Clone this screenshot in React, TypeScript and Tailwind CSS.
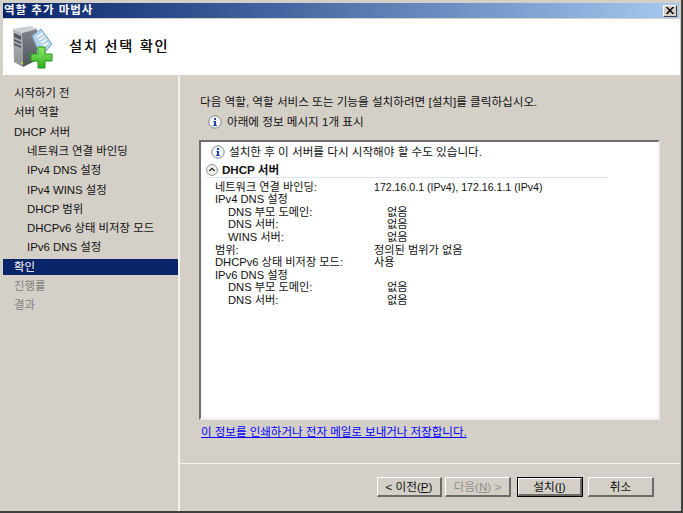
import React from 'react'

const font = { fontFamily: '"Liberation Sans", "Noto Sans CJK KR", sans-serif' }

function ServerIcon() {
  return (
    <svg width="41" height="43" viewBox="12 26 41 43" className="shrink-0">
      <defs>
        <linearGradient id="side" x1="0" y1="0" x2="0" y2="1">
          <stop offset="0" stopColor="#7f858b" />
          <stop offset="1" stopColor="#4f5458" />
        </linearGradient>
        <linearGradient id="front" x1="0" y1="0" x2="0" y2="1">
          <stop offset="0" stopColor="#b4babf" />
          <stop offset="1" stopColor="#8d9297" />
        </linearGradient>
        <linearGradient id="plus" x1="0" y1="0" x2="0" y2="1">
          <stop offset="0" stopColor="#8fe866" />
          <stop offset="1" stopColor="#2fae22" />
        </linearGradient>
      </defs>
      <path d="M13 29 L30 26 L37 29 L22 33 Z" fill="#c9ced2" />
      <path d="M13 29 L22 33 L23 67 L14 62 Z" fill="url(#front)" />
      <path d="M22 33 L37 29 L37 60 L23 67 Z" fill="url(#side)" />
      <path d="M14 33 L21 36 L21 40 L14 37 Z M14 39 L21 42 L21 44 L14 41 Z M14 43 L21 46 L21 48 L14 45 Z" fill="#55595d" />
      <rect x="21" y="62" width="2" height="2" fill="#b7d83a" />
      <path d="M32 36 L41 29 L52 44 L45 52 L38 50 Z" fill="#b4d4ea" stroke="#6f9fc2" strokeWidth="1" />
      <path d="M37 37 L43 33 M39 40 L45 36 M41 43 L47 39 M43 46 L48 43" stroke="#fff" strokeWidth="1.5" />
      <path
        d="M31 54 H38 V47 H45 V54 H52 V61 H45 V68 H38 V61 H31 Z"
        fill="url(#plus)"
        stroke="#1f9a1a"
        strokeWidth="1"
      />
    </svg>
  )
}

function InfoIcon() {
  return (
    <svg width="14" height="14" viewBox="0 0 14 14" className="shrink-0">
      <circle cx="7" cy="7" r="6.2" fill="#f4f6fa" stroke="#7c8796" strokeWidth="1" />
      <rect x="6" y="3" width="2" height="2" fill="#1c46b8" />
      <path d="M5.5 6 H8 V10 H9 V11 H5 V10 H6 V7 H5.5 Z" fill="#1c46b8" />
    </svg>
  )
}

function CollapseIcon() {
  return (
    <svg width="12" height="12" viewBox="0 0 12 12" className="shrink-0">
      <circle cx="6" cy="6" r="5.4" fill="#f3f3f0" stroke="#8a8f96" strokeWidth="1" />
      <path d="M3.3 7 L6 4.4 L8.7 7" fill="none" stroke="#222" strokeWidth="1.2" />
    </svg>
  )
}

function NavItem({ label, sub, active, muted }: { label: string; sub?: boolean; active?: boolean; muted?: boolean }) {
  return (
    <div className="h-[19.3px] flex items-center">
      <div
        className={`w-full h-[16px] flex items-center whitespace-nowrap text-[11.4px] ${
          sub ? 'pl-[24px]' : 'pl-[11px]'
        } ${active ? 'bg-[#0a246a] text-white' : muted ? 'text-[#80807c]' : 'text-[#111]'}`}
      >
        {label}
      </div>
    </div>
  )
}

function Row({ label, value, sub, latin }: { label: string; value?: string; sub?: boolean; latin?: boolean }) {
  return (
    <div className="h-[12.6px] flex items-center whitespace-nowrap leading-none text-[11.2px] text-[#111]">
      <div className={`w-[159px] shrink-0 ${sub ? 'pl-[13px]' : ''}`}>{label}</div>
      {value && (
        <div className={`${sub ? 'pl-[13px]' : ''} ${latin ? 'text-[10.6px]' : ''}`}>{value}</div>
      )}
    </div>
  )
}

function WizardButton({
  children,
  width,
  primary,
  disabled,
}: {
  children: React.ReactNode
  width: string
  primary?: boolean
  disabled?: boolean
}) {
  return (
    <div
      className={`${width} h-[20px] flex items-center justify-center bg-[#d4d0c8] whitespace-nowrap ${
        primary ? 'border border-black' : ''
      }`}
    >
      <div
        className={`w-full h-full flex items-center justify-center border-t border-l border-t-white border-l-white border-r-2 border-b-2 border-r-[#6b6a66] border-b-[#6b6a66] ${
          disabled ? 'text-[#8f8e89]' : 'text-[#111]'
        }`}
      >
        {children}
      </div>
    </div>
  )
}

export default function App() {
  return (
    <div
      style={font}
      className="w-[683px] h-[513px] flex flex-col overflow-hidden bg-[#d4d0c8] text-[11.6px] text-[#111] border-r-2 border-b-2 border-r-[#404040] border-b-[#404040] pt-[3px]"
    >
      <div className="ml-[3px] mr-[2px] h-[15px] shrink-0 flex items-center justify-between bg-gradient-to-r from-[#0a246a] to-[#a6caf0] pl-[1px] pr-[2px]">
        <span className="text-white font-bold text-[11.5px] tracking-[1px] leading-none">역할 추가 마법사</span>
        <div className="w-[14px] h-[12px] flex items-center justify-center bg-[#d4d0c8] border-t border-l border-t-white border-l-white border-r border-b border-r-[#404040] border-b-[#404040]">
          <svg width="8" height="7" viewBox="0 0 8 7">
            <path d="M0.5 0 L7.5 7 M7.5 0 L0.5 7" stroke="#000" strokeWidth="1.5" />
          </svg>
        </div>
      </div>

      <div className="ml-[3px] mr-[1px] mt-[1px] h-[57px] shrink-0 bg-white flex items-center pl-[9px] gap-[16px] border-b border-b-[#d4d0c8]">
        <ServerIcon />
        <span className="text-[14px] tracking-[1.9px] -mt-[1px] [text-shadow:0.3px_0_0_#000]">설치 선택 확인</span>
      </div>

      <div className="flex-1 flex min-h-0 ml-[3px] mr-[1px]">
        <div className="w-[177px] shrink-0 pt-[8px] border-r-2 border-r-[#f4f3ef]">
          <NavItem label="시작하기 전" />
          <NavItem label="서버 역할" />
          <NavItem label="DHCP 서버" />
          <NavItem label="네트워크 연결 바인딩" sub />
          <NavItem label="IPv4 DNS 설정" sub />
          <NavItem label="IPv4 WINS 설정" sub />
          <NavItem label="DHCP 범위" sub />
          <NavItem label="DHCPv6 상태 비저장 모드" sub />
          <NavItem label="IPv6 DNS 설정" sub />
          <NavItem label="확인" active />
          <NavItem label="진행률" muted />
          <NavItem label="결과" muted />
        </div>

        <div className="flex-1 flex flex-col min-w-0">
          <div className="h-[388px] shrink-0 pl-[20px] pr-[20px] pt-[18px] flex flex-col border-b border-b-[#f4f3ef]">
            <div className="h-[16px] flex items-center whitespace-nowrap">
              다음 역할, 역할 서비스 또는 기능을 설치하려면 [설치]를 클릭하십시오.
            </div>
            <div className="h-[16px] mt-[4px] flex items-center gap-[5px] pl-[8px] whitespace-nowrap">
              <InfoIcon />
              아래에 정보 메시지 1개 표시
            </div>
            <div className="mt-[10px] -ml-[1px] h-[280px] bg-white border-t-2 border-l-2 border-t-[#6f6e6a] border-l-[#6f6e6a] border-r-2 border-b-2 border-r-[#f1efe9] border-b-[#f1efe9] pl-[8px] flex flex-col">
              <div className="h-[17px] mt-[1px] flex items-center gap-[4px] pl-[2px] whitespace-nowrap">
                <InfoIcon />
                설치한 후 이 서버를 다시 시작해야 할 수도 있습니다.
              </div>
              <div className="h-[15px] mt-[3px] flex items-center gap-[4px] mr-[50px] border-b border-b-[#dbe6f5] font-bold whitespace-nowrap -ml-[3px]">
                <CollapseIcon />
                DHCP 서버
              </div>
              <div className="pl-[6px] mt-[3px]">
                <Row label="네트워크 연결 바인딩:" value="172.16.0.1 (IPv4), 172.16.1.1 (IPv4)" latin />
                <Row label="IPv4 DNS 설정" />
                <Row label="DNS 부모 도메인:" value="없음" sub />
                <Row label="DNS 서버:" value="없음" sub />
                <Row label="WINS 서버:" value="없음" sub />
                <Row label="범위:" value="정의된 범위가 없음" />
                <Row label="DHCPv6 상태 비저장 모드:" value="사용" />
                <Row label="IPv6 DNS 설정" />
                <Row label="DNS 부모 도메인:" value="없음" sub />
                <Row label="DNS 서버:" value="없음" sub />
              </div>
            </div>
            <div className="mt-[5px] ml-[1px] h-[16px] flex items-center whitespace-nowrap text-[11.5px] text-[#0000ff] underline">
              이 정보를 인쇄하거나 전자 메일로 보내거나 저장합니다.
            </div>
          </div>
          <div className="flex-1 flex items-start pt-[13px] pl-[197px]">
            <WizardButton width="w-[65px]">
              &lt; 이전(<span className="underline">P</span>)
            </WizardButton>
            <div className="ml-[3px]">
              <WizardButton width="w-[66px]" disabled>
                다음(<span className="underline">N</span>) &gt;
              </WizardButton>
            </div>
            <div className="ml-[6px]">
              <WizardButton width="w-[66px]" primary>
                설치(<span className="underline">I</span>)
              </WizardButton>
            </div>
            <div className="ml-[5px]">
              <WizardButton width="w-[66px]">취소</WizardButton>
            </div>
          </div>
        </div>
      </div>
    </div>
  )
}
